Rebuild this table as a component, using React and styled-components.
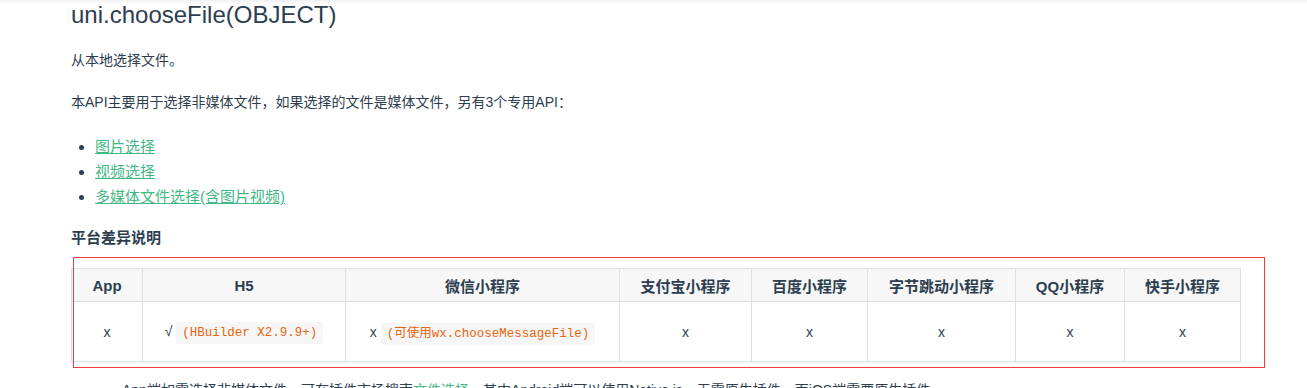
import React from "react";
import styled, { createGlobalStyle } from "styled-components";

const Global = createGlobalStyle`
  html, body { margin: 0; padding: 0; }
  body {
    background: linear-gradient(to bottom, rgba(0,0,0,0.06), rgba(0,0,0,0) 4px) no-repeat, #fff;
    font-family: "Liberation Sans", "Noto Sans CJK SC", sans-serif;
    color: #2c3e50;
    font-size: 14px;
  }
`;

const Page = styled.div`
  padding: 0 0 0 71px;
  width: 1169px;
  display: flex;
  flex-direction: column;
`;

const Title = styled.h1`
  margin: 0;
  font-size: 24px;
  line-height: 30px;
  font-weight: 400;
  color: #2c3e50;
`;

const Para = styled.p`
  margin: ${(p) => p.$top || 0}px 0 0;
  line-height: 24px;
  font-size: 14px;
`;

const List = styled.ul`
  margin: ${(p) => p.$top || 0}px 0 0;
  padding-left: ${(p) => p.$indent || 24}px;
  line-height: 25px;
  list-style: disc;
`;

const Item = styled.li`
  font-size: ${(p) => p.$size || 15}px;
`;

const Link = styled.a`
  color: #42b983;
  text-decoration: underline;
`;

const Heading = styled.p`
  margin: 17px 0 0;
  font-size: 15px;
  line-height: 24px;
  font-weight: 700;
`;

const TableWrap = styled.div`
  position: relative;
  margin-top: 18px;
`;

const Table = styled.table`
  border-collapse: collapse;
  table-layout: fixed;
  width: 1169px;
`;

const Th = styled.th`
  background: #f7f7f7;
  border: 1px solid #dfdfdf;
  height: 32px;
  padding: 0 8px;
  font-size: 15px;
  font-weight: 700;
  text-align: center;
  color: #2c3e50;
`;

const Td = styled.td`
  border: 1px solid #dfdfdf;
  height: 59px;
  padding: 0 8px;
  text-align: center;
  font-size: 14px;
  color: #2c3e50;
`;

const Code = styled.code`
  font-family: "Liberation Mono", "Noto Sans CJK SC", monospace;
  font-size: 12.5px;
  color: #e8650c;
  background: #f6f6f6;
  padding: 4px 6px;
  border-radius: 3px;
  margin-left: ${(p) => p.$gap || 0}px;
`;

const Highlight = styled.div`
  position: absolute;
  left: 2px;
  top: -11px;
  width: 1190px;
  height: 109px;
  border: 1px solid #f03c3c;
  pointer-events: none;
`;

const cols = [
  ["App", 71],
  ["H5", 203],
  ["微信小程序", 274],
  ["支付宝小程序", 132],
  ["百度小程序", 116],
  ["字节跳动小程序", 148],
  ["QQ小程序", 109],
  ["快手小程序", 116],
];

export default function App() {
  return (
    <>
      <Global />
      <Page>
        <Title>uni.chooseFile(OBJECT)</Title>
        <Para $top={18}>从本地选择文件。</Para>
        <Para $top={18}>本API主要用于选择非媒体文件，如果选择的文件是媒体文件，另有3个专用API：</Para>
        <List $top={20}>
          <Item><Link href="#">图片选择</Link></Item>
          <Item><Link href="#">视频选择</Link></Item>
          <Item><Link href="#">多媒体文件选择(含图片视频)</Link></Item>
        </List>
        <Heading>平台差异说明</Heading>
        <TableWrap>
          <Table>
            <colgroup>
              {cols.map(([n, w]) => (
                <col key={n} style={{ width: w }} />
              ))}
            </colgroup>
            <thead>
              <tr>
                {cols.map(([n]) => (
                  <Th key={n}>{n}</Th>
                ))}
              </tr>
            </thead>
            <tbody>
              <tr>
                <Td>x</Td>
                <Td>
                  √<Code $gap={4}>(HBuilder X2.9.9+)</Code>
                </Td>
                <Td>
                  x<Code $gap={4}>(可使用wx.chooseMessageFile)</Code>
                </Td>
                <Td>x</Td>
                <Td>x</Td>
                <Td>x</Td>
                <Td>x</Td>
                <Td>x</Td>
              </tr>
            </tbody>
          </Table>
          <Highlight />
        </TableWrap>
        <List $top={16} $indent={51}>
          <Item $size={14}>
            App端如需选择非媒体文件，可在插件市场搜索<Link href="#">文件选择</Link>，其中Android端可以使用Native.js，无需原生插件，而iOS端需要原生插件。
          </Item>
        </List>
      </Page>
    </>
  );
}
